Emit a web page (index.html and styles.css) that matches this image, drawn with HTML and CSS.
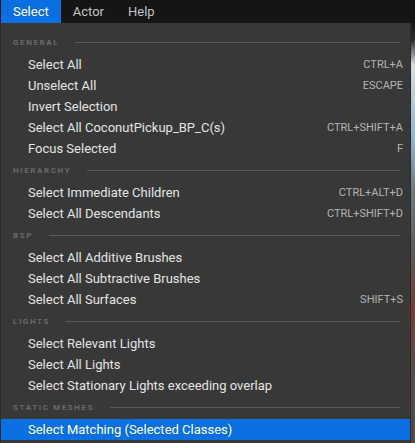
FILE: index.html
```html
<!DOCTYPE html>
<html lang="en">
<head>
    <meta charset="UTF-8">
    <meta name="viewport" content="width=device-width, initial-scale=1.0">
    <title>Select menu</title>
    <link rel="stylesheet" href="styles.css">
</head>
<body>
    <nav class="menubar">
        <a class="tab active">Select</a>
        <a class="tab">Actor</a>
        <a class="tab">Help</a>
    </nav>
    <div class="stage">
        <div class="menu">
            <div class="heading"><span>General</span></div>
            <div class="item"><span>Select All</span><span class="key">CTRL+A</span></div>
            <div class="item"><span>Unselect All</span><span class="key">ESCAPE</span></div>
            <div class="item"><span>Invert Selection</span></div>
            <div class="item"><span>Select All CoconutPickup_BP_C(s)</span><span class="key">CTRL+SHIFT+A</span></div>
            <div class="item"><span>Focus Selected</span><span class="key">F</span></div>

            <div class="heading"><span>Hierarchy</span></div>
            <div class="item"><span>Select Immediate Children</span><span class="key">CTRL+ALT+D</span></div>
            <div class="item"><span>Select All Descendants</span><span class="key">CTRL+SHIFT+D</span></div>

            <div class="heading"><span>BSP</span></div>
            <div class="item"><span>Select All Additive Brushes</span></div>
            <div class="item"><span>Select All Subtractive Brushes</span></div>
            <div class="item"><span>Select All Surfaces</span><span class="key">SHIFT+S</span></div>

            <div class="heading"><span>Lights</span></div>
            <div class="item"><span>Select Relevant Lights</span></div>
            <div class="item"><span>Select All Lights</span></div>
            <div class="item"><span>Select Stationary Lights exceeding overlap</span></div>

            <div class="heading"><span>Static Meshes</span></div>
            <div class="item hover"><span>Select Matching (Selected Classes)</span></div>
        </div>
        <div class="scene"></div>
    </div>
</body>
</html>
```

FILE: styles.css
```css
body {
    margin: 0;
    padding: 0;
    background-color: #151515;
    font-family: Roboto, "Noto Sans", sans-serif;
    overflow: hidden;
}

.menubar {
    display: flex;
    height: 23px;
    padding-left: 1px;
    background-color: #151515;
}

.tab {
    display: block;
    padding: 0 12px;
    line-height: 23px;
    font-size: 13px;
    color: #c4c4c4;
}

.tab.active {
    background-color: #0a6fe0;
    color: white;
}

.stage {
    display: flex;
    height: 420px;
}

.menu {
    width: 409px;
    padding-top: 8px;
    background-color: #383838;
    border-left: 1px solid #2c2c2c;
    border-right: 1px solid #2a2a2a;
}

.heading {
    display: flex;
    align-items: center;
    gap: 16px;
    height: 23px;
    padding: 0 10px 0 12px;
    font-size: 8px;
    font-weight: bold;
    letter-spacing: 1.6px;
    text-transform: uppercase;
    color: #6a6a6a;
}

.heading::after {
    content: "";
    flex: 1;
    height: 1px;
    background-color: #5a5a5a;
}

.item {
    display: flex;
    justify-content: space-between;
    align-items: center;
    height: 21px;
    padding: 0 7px 0 27px;
    font-size: 13px;
    color: #e4e4e4;
}

.item .key {
    font-size: 11px;
    color: #b4b4b4;
}

.item.hover {
    background-color: #0a6fe0;
    color: white;
}

.scene {
    flex: 1;
    background: linear-gradient(to bottom, #1a1a1a 0, #2a2a2a 4%, #d8dde2 10%, #c9d3da 14%, #8fb3c8 28%, #6f7a80 40%, #5a5a58 55%, #7a3a34 68%, #5a4a48 80%, #4c4c4c 100%);
}
```
